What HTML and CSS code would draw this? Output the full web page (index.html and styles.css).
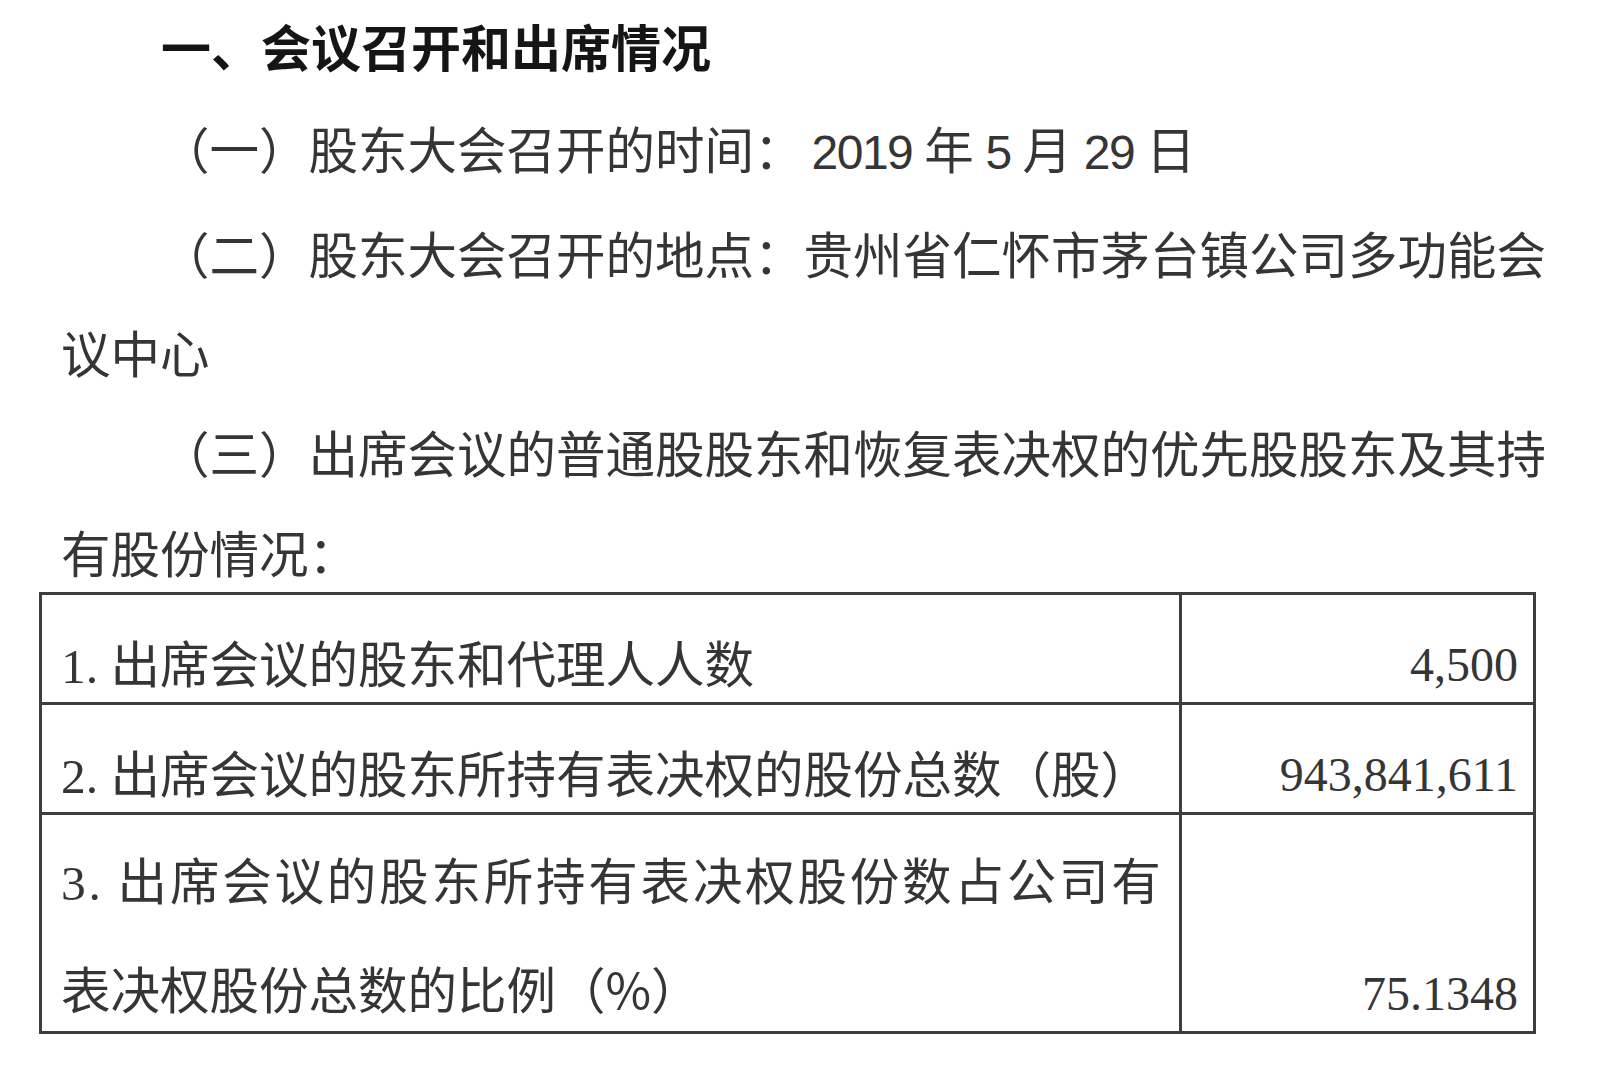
FILE: index.html
```html
<!DOCTYPE html>
<html lang="zh-CN">
<head>
<meta charset="utf-8">
<title>会议召开和出席情况</title>
<link rel="stylesheet" href="styles.css">
</head>
<body>
<div class="doc">
  <h1 class="heading">一、会议召开和出席情况</h1>
  <div class="paras">
    <p class="para">（一）股东大会召开的时间：<span class="lat first">2019 </span>年<span class="lat"> 5 </span>月<span class="lat"> 29 </span>日</p>
    <p class="para">（二）股东大会召开的地点：贵州省仁怀市茅台镇公司多功能会议中心</p>
    <p class="para">（三）出席会议的普通股股东和恢复表决权的优先股股东及其持有股份情况：</p>
  </div>
</div>
<div class="tbl">
  <div class="cell label row-a"><span class="ser">1. </span>出席会议的股东和代理人人数</div>
  <div class="cell value row-a">4,500</div>
  <div class="cell label row-a"><span class="ser">2. </span>出席会议的股东所持有表决权的股份总数（股）</div>
  <div class="cell value row-a">943,841,611</div>
  <div class="cell label row-b">
    <span class="line spread"><span class="ser">3.</span> 出席会议的股东所持有表决权股份数占公司有</span>
    <span class="line">表决权股份总数的比例（%）</span>
  </div>
  <div class="cell value row-b">75.1348</div>
</div>
</body>
</html>
```

FILE: styles.css
```css
html, body {
  margin: 0;
  padding: 0;
  background: #ffffff;
}

body {
  width: 1599px;
  height: 1071px;
  overflow: hidden;
  color: #353535;
  font-family: "Noto Sans CJK SC", "Noto Sans", sans-serif;
}

.doc {
  margin-left: 61px;
  width: 1500px;
}

.heading {
  margin: 0;
  font-size: 50px;
  line-height: 90px;
  font-weight: 700;
  color: #151515;
  text-indent: 2em;
}

.paras {
  margin-top: 8px;
  font-size: 49.5px;
  line-height: 99.7px;
}

.para {
  margin: 0;
  text-indent: 2em;
}

.lat {
  font-family: "Liberation Sans", sans-serif;
  font-size: 48px;
  letter-spacing: -1.5px;
  word-spacing: 0;
}

.lat.first {
  margin-left: 8px;
}

.ser {
  font-family: "Liberation Serif", serif;
}

.tbl {
  margin-top: -9.5px;
  margin-left: 39px;
  width: 1497px;
  box-sizing: border-box;
  border: 3px solid #3e3e3e;
  display: grid;
  grid-template-columns: 1140px 1fr;
  grid-template-rows: 110px 110px 216px;
  font-size: 49.5px;
}

.cell {
  box-sizing: border-box;
}

.row-a {
  border-bottom: 3px solid #3e3e3e;
}

.label {
  border-right: 3px solid #3e3e3e;
  padding-left: 19px;
  white-space: nowrap;
}

.row-a.label {
  padding-top: 37px;
  line-height: 60px;
}

.row-b.label {
  padding-top: 12px;
  line-height: 104px;
}

.line {
  display: block;
}

.spread {
  letter-spacing: 2.8px;
}

.value {
  font-family: "Liberation Serif", serif;
  font-size: 48px;
  line-height: 60px;
  text-align: right;
  padding-right: 15px;
  display: flex;
  justify-content: flex-end;
  align-items: flex-end;
  padding-bottom: 7px;
}
```
